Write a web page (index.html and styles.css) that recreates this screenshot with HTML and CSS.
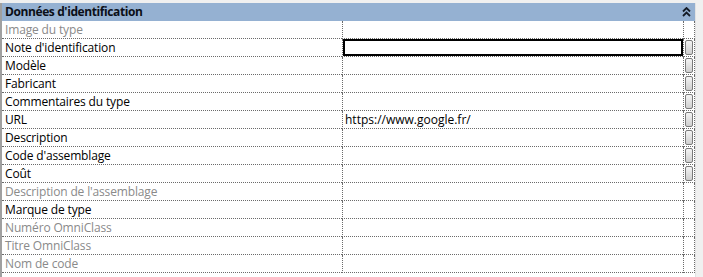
FILE: index.html
```html
<!DOCTYPE html>
<html lang="fr">
<head>
<meta charset="utf-8">
<title>Données d'identification</title>
<link rel="stylesheet" href="styles.css">
</head>
<body>
<div class="frame">
  <div class="panel">
    <div class="header">
      <span class="title">Données d'identification</span>
      <svg class="chev" width="9" height="10" viewBox="0 0 9 10"><path d="M1 4.5 L4.5 1 L8 4.5 M1 9 L4.5 5.5 L8 9" fill="none" stroke="#141b26" stroke-width="1.8"/></svg>
    </div>
    <div class="grid">
      <div class="row"><div class="name ro">Image du type</div><div class="val"></div><div class="btn"></div></div>
      <div class="row"><div class="name">Note d'identification</div><div class="val"><div class="edit"></div></div><div class="btn"><span class="knob"></span></div></div>
      <div class="row"><div class="name">Modèle</div><div class="val"></div><div class="btn"><span class="knob"></span></div></div>
      <div class="row"><div class="name">Fabricant</div><div class="val"></div><div class="btn"><span class="knob"></span></div></div>
      <div class="row"><div class="name">Commentaires du type</div><div class="val"></div><div class="btn"><span class="knob"></span></div></div>
      <div class="row"><div class="name">URL</div><div class="val">https://www.google.fr/</div><div class="btn"><span class="knob"></span></div></div>
      <div class="row"><div class="name">Description</div><div class="val"></div><div class="btn"><span class="knob"></span></div></div>
      <div class="row"><div class="name">Code d'assemblage</div><div class="val"></div><div class="btn"><span class="knob"></span></div></div>
      <div class="row"><div class="name">Coût</div><div class="val"></div><div class="btn"><span class="knob"></span></div></div>
      <div class="row"><div class="name ro">Description de l'assemblage</div><div class="val"></div><div class="btn"></div></div>
      <div class="row"><div class="name">Marque de type</div><div class="val"></div><div class="btn"></div></div>
      <div class="row"><div class="name ro">Numéro OmniClass</div><div class="val"></div><div class="btn"></div></div>
      <div class="row"><div class="name ro">Titre OmniClass</div><div class="val"></div><div class="btn"></div></div>
      <div class="row"><div class="name ro">Nom de code</div><div class="val"></div><div class="btn"></div></div>
    </div>
  </div>
  <div class="side"></div>
</div>
</body>
</html>
```
FILE: styles.css
```css
html, body {
  margin: 0;
  padding: 0;
  background: #f0f0f0;
}
body {
  font-family: "Open Sans", "DejaVu Sans", sans-serif;
  font-size: 12px;
  color: #000;
}
.frame {
  display: flex;
  width: 703px;
  height: 277px;
  padding-top: 3px;
  box-sizing: border-box;
  overflow: hidden;
}
.panel {
  width: 695px;
  border-left: 2px solid #a0a0a0;
  background: #fff;
  box-sizing: border-box;
}
.side {
  flex: 1;
  border-left: 1px solid #e2e2e2;
  background: #f0f0f0;
}
.header {
  height: 18px;
  background: #95b1d2;
  display: flex;
  align-items: center;
  justify-content: space-between;
  padding: 0 4px 0 3px;
}
.title {
  font-weight: bold;
  color: #0b0f18;
  line-height: 18px;
  letter-spacing: -0.4px;
}
.chev { display: block; }
.grid {
  display: grid;
  grid-template-columns: 340px 341px 12px;
}
.row {
  display: contents;
}
.name, .val, .btn {
  height: 18px;
  border-bottom: 1px dotted #6b6b6b;
  box-sizing: border-box;
  line-height: 17px;
  white-space: nowrap;
  overflow: hidden;
}
.name {
  padding-left: 3px;
  letter-spacing: -0.15px;
}
.name.ro { color: #8a8a8a; }
.val {
  border-left: 1px dotted #6b6b6b;
  padding-left: 2px;
  position: relative;
}
.btn {
  border-left: 1px dotted #6b6b6b;
  border-right: 1px dotted #6b6b6b;
  display: flex;
  align-items: center;
  justify-content: center;
}
.edit {
  position: absolute;
  left: 0;
  top: 0;
  right: 0;
  bottom: 0;
  border: 2px solid #000;
  background: #fff;
}
.knob {
  width: 8px;
  height: 15px;
  border: 1px solid #7a7a7a;
  border-radius: 2px;
  background: linear-gradient(#f4f4f4, #cfcfcf);
  box-sizing: border-box;
}
```
